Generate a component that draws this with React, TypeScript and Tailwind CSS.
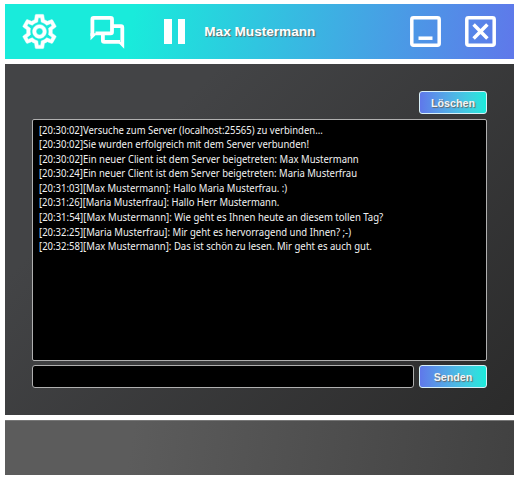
import type { ReactNode } from "react";
import { MdOutlineSettings } from "react-icons/md";

const messages = [
  { text: "[20:30:02]Versuche zum Server (localhost:25565) zu verbinden...", width: 284 },
  { text: "[20:30:02]Sie wurden erfolgreich mit dem Server verbunden!", width: 270 },
  { text: "[20:30:02]Ein neuer Client ist dem Server beigetreten: Max Mustermann", width: 319.5 },
  { text: "[20:30:24]Ein neuer Client ist dem Server beigetreten: Maria Musterfrau", width: 318 },
  { text: "[20:31:03][Max Mustermann]: Hallo Maria Musterfrau. :)", width: 248 },
  { text: "[20:31:26][Maria Musterfrau]: Hallo Herr Mustermann.", width: 240.5 },
  { text: "[20:31:54][Max Mustermann]: Wie geht es Ihnen heute an diesem tollen Tag?", width: 344.5 },
  { text: "[20:32:25][Maria Musterfrau]: Mir geht es hervorragend und Ihnen? ;-)", width: 312 },
  { text: "[20:32:58][Max Mustermann]: Das ist schön zu lesen. Mir geht es auch gut.", width: 333 },
];

function fitLine(el: HTMLSpanElement | null, width: number) {
  if (el) el.style.transform = `scaleX(${width / el.offsetWidth})`;
}

function IconButton({ label, className, children }: { label: string; className: string; children: ReactNode }) {
  return (
    <button aria-label={label} className={`shrink-0 text-white ${className}`}>
      {children}
    </button>
  );
}

function ActionButton({ children }: { children: ReactNode }) {
  return (
    <button className="h-[23px] w-[68px] shrink-0 rounded-[3px] border border-[#d8f0f8] bg-linear-to-r from-[#5f78ea] to-[#19ebdb] text-[10.7px] leading-[22px] font-bold text-[#f4f4f4] [text-shadow:1px_1px_1px_#666]">
      {children}
    </button>
  );
}

export default function App() {
  return (
    <div className="flex h-[480px] w-[518px] flex-col gap-[5px] bg-white pt-1 pr-1 pl-[5px] font-['Liberation_Sans',Arial,sans-serif]">
      <header className="flex h-[55px] shrink-0 items-start bg-[linear-gradient(98deg,#19ebdb_0%,#19ebdb_25%,#5f78ea_100%)]">
        <IconButton label="Einstellungen" className="mt-[7px] ml-[13.5px]">
          <MdOutlineSettings size={41} className="[stroke-width:0.3] stroke-current [&>path:first-child]:hidden" />
        </IconButton>
        <IconButton label="Chat" className="mt-3 ml-[30px]">
          <svg width="35" height="33" viewBox="0 0 35 33" fill="none" stroke="currentColor" strokeWidth="3.8">
            <path d="M2.4 20V3.2Q2.4 1.9 3.7 1.9H20.7Q22 1.9 22 3.2V16Q22 17.3 20.7 17.3H5.5" />
            <path d="M.5 17.3V24.2L7.5 17.3Z" fill="currentColor" stroke="none" />
            <path d="M22 10.2H31Q32.3 10.2 32.3 11.5V26M30 25.8H14.2Q12.9 25.8 12.9 24.5V18" />
            <path d="M27.5 26H34.2V32.7Z" fill="currentColor" stroke="none" />
          </svg>
        </IconButton>
        <IconButton label="Pause" className="mt-[15px] ml-[39.8px]">
          <span className="flex gap-[6px]">
            <span className="h-[25px] w-[7.5px] bg-white" />
            <span className="h-[25px] w-[7.5px] bg-white" />
          </span>
        </IconButton>
        <h1 className="mt-[19px] ml-[19px] text-[13.6px] leading-[18px] font-bold whitespace-nowrap text-white [text-shadow:1px_1px_1px_#666]">
          Max Mustermann
        </h1>
        <div className="mt-3 mr-[18px] ml-auto flex gap-6">
          <IconButton label="Minimieren" className="">
            <svg width="31" height="31" viewBox="0 0 31 31" fill="none" stroke="currentColor" strokeWidth="3.5">
              <rect x="1.8" y="1.8" width="27.4" height="27.4" rx="1.7" />
              <path d="M8.5 22.2H22.5" />
            </svg>
          </IconButton>
          <IconButton label="Schließen" className="">
            <svg width="31" height="31" viewBox="0 0 31 31" fill="none" stroke="currentColor" strokeWidth="3.5">
              <rect x="1.8" y="1.8" width="27.4" height="27.4" rx="1.7" />
              <path d="M8.6 8.6L22.4 22.4M22.4 8.6L8.6 22.4" />
            </svg>
          </IconButton>
        </div>
      </header>

      <main className="flex h-[351px] shrink-0 flex-col bg-[linear-gradient(135deg,#434446_0%,#434446_25%,#2b2b2b_100%)] pt-[27px] pr-[27px] pl-[27px]">
        <div className="flex justify-end">
          <ActionButton>Löschen</ActionButton>
        </div>
        <section className="mt-[5px] h-[242px] shrink-0 rounded-[2px] border border-[#b0b0b0] bg-black pt-[2.6px] pl-[5.7px]">
          {messages.map((m) => (
            <p key={m.text} className="h-[14.58px] font-['Noto_Sans','Open_Sans',sans-serif] text-[10.8px] leading-[14.58px] text-[#f2f2f2]">
              <span ref={(el) => fitLine(el, m.width)} className="inline-block origin-left whitespace-nowrap">
                {m.text}
              </span>
            </p>
          ))}
        </section>
        <form className="mt-1 flex justify-between">
          <input aria-label="Nachricht" className="h-[23px] w-[382px] rounded-[3px] border border-[#b0b0b0] bg-black px-2 text-[11px] text-white" />
          <ActionButton>Senden</ActionButton>
        </form>
      </main>

      <footer className="h-[55px] shrink-0 border-t border-[#777] bg-[linear-gradient(98deg,#5c5c5c_0%,#5c5c5c_25%,#414141_100%)]" />
    </div>
  );
}
